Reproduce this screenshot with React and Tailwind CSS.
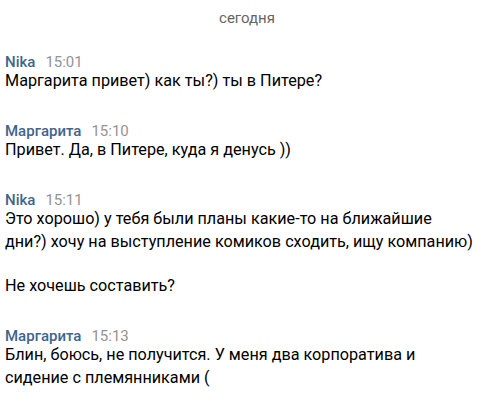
export default function App() {
  const blocks = [
    { name: "Nika", time: "15:01", paras: ["Маргарита привет) как ты?) ты в Питере?"] },
    { name: "Маргарита", time: "15:10", paras: ["Привет. Да, в Питере, куда я денусь ))"] },
    {
      name: "Nika",
      time: "15:11",
      paras: [
        "Это хорошо) у тебя были планы какие-то на ближайшие дни?) хочу на выступление комиков сходить, ищу компанию)",
        "Не хочешь составить?",
      ],
    },
    {
      name: "Маргарита",
      time: "15:13",
      paras: ["Блин, боюсь, не получится. У меня два корпоратива и сидение с племянниками ("],
    },
  ];
  return (
    <div className="w-[489px] h-[408px] bg-white overflow-hidden font-['Roboto',sans-serif] pl-[5px]">
      <div className="pt-[8px] h-[28px] text-center text-[15px] leading-[20px] text-[#656565]">сегодня</div>
      <div className="flex flex-col gap-[29px] mt-[24px]">
        {blocks.map((b, i) => (
          <div key={i}>
            <div className="flex items-baseline text-[15px] leading-[20px]">
              <span className="font-medium text-[#42648b]">{b.name}</span>
              <span className="ml-[10px] text-[#939393]">{b.time}</span>
            </div>
            {b.paras.map((p, j) => (
              <p
                key={j}
                className={`text-[16.2px] leading-[23px] text-black max-w-[469px] ${j > 0 ? "mt-[21px]" : "mt-[-3px]"}`}
              >
                {p}
              </p>
            ))}
          </div>
        ))}
      </div>
    </div>
  );
}
